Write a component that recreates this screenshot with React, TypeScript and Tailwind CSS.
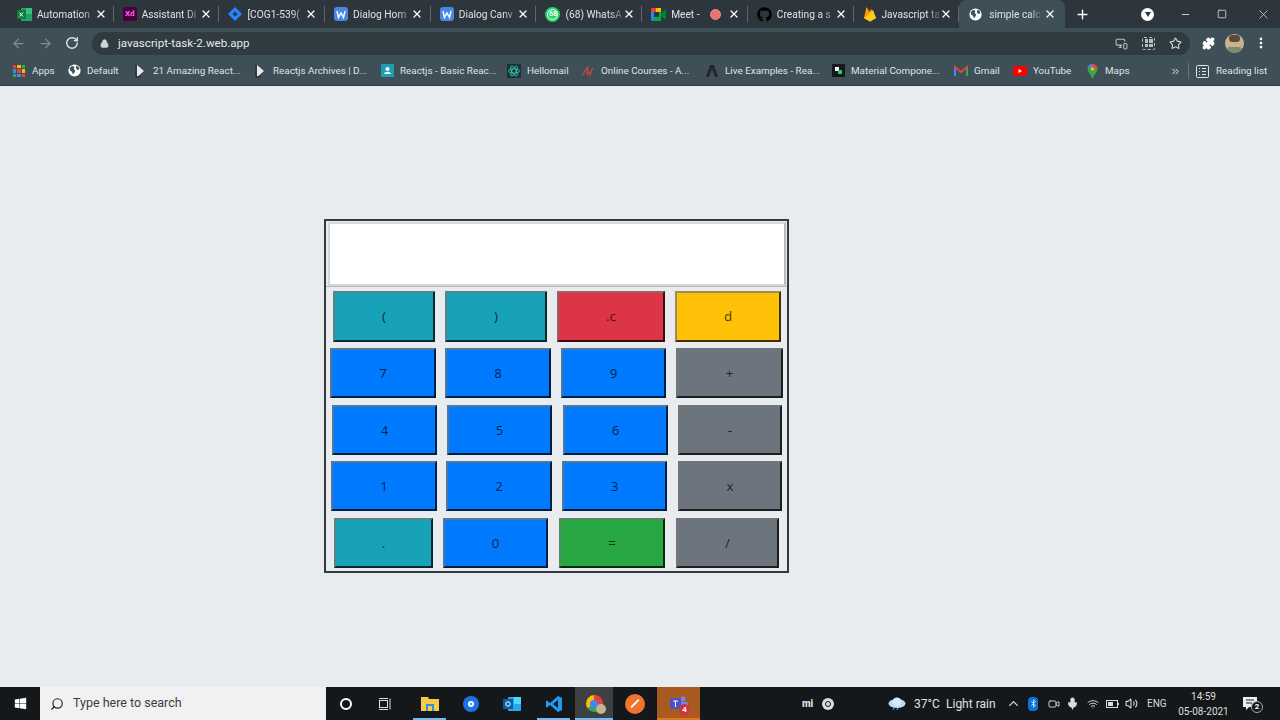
import React from 'react';
import { X, Plus, ArrowLeft, ArrowRight, RotateCw, Lock, Star, Puzzle, MoreVertical, Minus, Square, ChevronUp, Bluetooth, Mic, Wifi, Volume2, Search, MonitorSmartphone, ChevronsRight, Video } from 'lucide-react';
import { FaGithub, FaWindows } from 'react-icons/fa';

const Globe = ({ s = 15, c = '#fff', bg = '#3f4f58' }: { s?: number; c?: string; bg?: string }) => (
  <svg width={s} height={s} viewBox="0 0 16 16" className="shrink-0">
    <circle cx="8" cy="8" r="7.5" fill={c} />
    <path d="M2 5l3-2.5 3 1-1 2.5 2 2-1.5 3-1.5 2-1-3.5-2-1zM10 2l3 1.5 1 3-2.5 1-1.5-2z" fill={bg} />
  </svg>
);

const DocIcon = () => (
  <svg width="14" height="14" viewBox="0 0 14 14" className="shrink-0">
    <rect width="14" height="14" rx="3" fill="#4a86e8" />
    <path d="M3 4l1.500 6.500L7 6l2.500 4.500L11 4" stroke="#fff" strokeWidth="1.400" fill="none" />
  </svg>
);

const Page = () => (
  <svg width="12" height="14" viewBox="0 0 12 14"><path d="M3 1l7 6-7 6z" fill="#e8e8e8" /><path d="M2 1v12h5" stroke="#222" fill="none" /></svg>
);

const tabs = [
  { title: 'Automation', icon: <svg width="15" height="13" viewBox="0 0 15 13" className="shrink-0"><rect x="4" width="11" height="13" rx="1" fill="#21a366" /><rect x="9" width="6" height="6" fill="#33c481" /><rect width="9" height="9" y="2" fill="#107c41" /><path d="M2.500 4.500l3.500 4M6 4.500l-3.500 4" stroke="#fff" /></svg> },
  { title: 'Assistant Di', icon: <span className="flex h-[14px] w-[14px] shrink-0 items-center justify-center rounded-[2px] bg-[#470137] text-[8px] font-bold text-[#ff61f6]">Xd</span> },
  { title: '[COG1-539(', icon: <svg width="14" height="14" viewBox="0 0 14 14" className="shrink-0"><path d="M7 0l7 7-7 7-7-7z" fill="#2684ff" /><path d="M7 4.500L9.500 7 7 9.500 4.500 7z" fill="#2d363c" /></svg> },
  { title: 'Dialog Hom', icon: <DocIcon /> },
  { title: 'Dialog Canv', icon: <DocIcon /> },
  { title: '(68) WhatsA', icon: <span className="relative flex h-[15px] w-[15px] shrink-0 items-center justify-center rounded-full bg-[#25d366] text-[7px] font-bold text-white"><span className="absolute inset-[2px] rounded-full border border-white" />68</span> },
];

const tabsRight = [
  { title: 'Creating a s', icon: <FaGithub size={15} className="shrink-0 text-black" /> },
  { title: 'Javascript ta', icon: <svg width="14" height="16" viewBox="0 0 14 16" className="shrink-0"><path d="M1 12L3.500 1l3 5 1.500-3 5 9-6 3.500z" fill="#ffa000" /><path d="M1 12l5.500-6 1.500-3 5 9-6 3.500z" fill="#f57c00" /><path d="M1 12l9-8 3 8-6 3.500z" fill="#ffca28" /></svg> },
];

const TabTitle = ({ title, w }: { title: string; w: string }) => (
  <span className={`${w} overflow-hidden whitespace-nowrap pt-px text-[10.200px] text-[#dfe3e6] [mask-image:linear-gradient(90deg,#000_78%,rgba(0,0,0,0.25))]`}>{title}</span>
);

const Tab = ({ title, icon }: { title: string; icon: React.ReactNode }) => (
  <div className="relative flex h-[28px] w-[105.700px] shrink-0 items-center pl-[9px]">
    {icon}
    <span className="w-[5px] shrink-0" />
    <TabTitle title={title} w="w-[57px]" />
    <X size={12} strokeWidth={2.5} className="ml-[1px] shrink-0 text-white" />
    <span className="absolute right-0 top-[6px] h-[16px] w-px bg-[#5b6870]" />
  </div>
);

const bookmarks: { label: string; icon: React.ReactNode; w: string }[] = [
  { label: 'Apps', w: 'w-[55px]', icon: <span className="grid h-[12px] w-[12px] grid-cols-3 gap-[1px]">{['#ea4335','#fbbc05','#34a853','#4285f4','#ea4335','#fbbc05','#34a853','#4285f4','#ea4335'].map((c, i) => <i key={i} className="block" style={{ background: c }} />)}</span> },
  { label: 'Default', w: 'w-[66px]', icon: <Globe s={13} /> },
  { label: '21 Amazing React...', w: 'w-[120px]', icon: <Page /> },
  { label: 'Reactjs Archives | D...', w: 'w-[127px]', icon: <Page /> },
  { label: 'Reactjs - Basic Reac...', w: 'w-[127px]', icon: <svg width="13" height="13" viewBox="0 0 13 13"><rect width="13" height="13" fill="#1b9fb5" /><circle cx="6.500" cy="5" r="2" fill="#fff" /><path d="M3 10c1-3 6-3 7 0z" fill="#fff" /></svg> },
  { label: 'Hellomail', w: 'w-[74px]', icon: <svg width="14" height="14" viewBox="0 0 14 14"><rect width="14" height="14" fill="#17343a" /><g fill="none" stroke="#3fd0b0" strokeWidth=".8"><ellipse cx="7" cy="7" rx="5.500" ry="2.200" /><ellipse cx="7" cy="7" rx="5.500" ry="2.200" transform="rotate(60 7 7)" /><ellipse cx="7" cy="7" rx="5.500" ry="2.200" transform="rotate(120 7 7)" /></g></svg> },
  { label: 'Online Courses - A...', w: 'w-[124px]', icon: <svg width="14" height="12" viewBox="0 0 14 12"><path d="M1 10C4 8 5 2 7 2L6 10M7 6l2 4c1-3 2-6 3-7" stroke="#c9453f" strokeWidth="1.400" fill="none" /></svg> },
  { label: 'Live Examples - Rea...', w: 'w-[126px]', icon: <svg width="14" height="14" viewBox="0 0 14 14"><path d="M5 1h4l4 12h-3L7 5 4 13H1z" fill="#23272b" /></svg> },
  { label: 'Material Compone...', w: 'w-[123px]', icon: <svg width="13" height="13" viewBox="0 0 13 13"><rect width="13" height="13" rx="1" fill="#16191c" /><rect x="3" y="3" width="4" height="4" fill="#fff" /><rect x="6" y="6" width="4" height="4" fill="#2ecc71" /></svg> },
  { label: 'Gmail', w: 'w-[59px]', icon: <svg width="14" height="11" viewBox="0 0 14 11"><path d="M1 11V2l6 5 6-5v9" fill="none" stroke="#ea4335" strokeWidth="1.800" /><path d="M1 11V3" stroke="#4285f4" strokeWidth="2" /><path d="M13 11V3" stroke="#34a853" strokeWidth="2" /></svg> },
  { label: 'YouTube', w: 'w-[72px]', icon: <svg width="14" height="10" viewBox="0 0 14 10"><rect width="14" height="10" rx="2.500" fill="#f00" /><path d="M5.500 3l3.500 2-3.500 2z" fill="#fff" /></svg> },
  { label: 'Maps', w: 'w-[85px]', icon: <svg width="11" height="15" viewBox="0 0 11 15"><path d="M5.500 0a5 5 0 0 1 5 5c0 3-3.500 5.500-5 10C4 10.500.5 8 .5 5a5 5 0 0 1 5-5z" fill="#34a853" /><path d="M1 3a5 5 0 0 1 4.500-3V5z" fill="#4285f4" /><path d="M5.500 0a5 5 0 0 1 5 5H5.500z" fill="#ea4335" /><circle cx="5.500" cy="5" r="1.800" fill="#fbbc05" /></svg> },
];

// widths and margins follow the reference, the rows are not quite aligned there
const rows = [
  { cls: 'mt-[4px] ml-[7px] h-[51px]', keys: [
    { t: '(', c: 'w-[102px] bg-[#17a2b8]' },
    { t: ')', c: 'ml-[10px] w-[102px] bg-[#17a2b8]' },
    { t: '.c', c: 'ml-[10px] w-[108px] bg-[#dc3545]' },
    { t: 'd', c: 'ml-[10px] w-[106px] bg-[#ffc107]' },
  ] },
  { cls: 'mt-[6px] ml-[4px] h-[50px]', keys: [
    { t: '7', c: 'w-[106px] bg-[#007bff]' },
    { t: '8', c: 'ml-[9px] w-[106px] bg-[#007bff]' },
    { t: '9', c: 'ml-[10px] w-[105px] bg-[#007bff]' },
    { t: '+', c: 'ml-[10px] w-[107px] bg-[#6c757d]' },
  ] },
  { cls: 'mt-[7px] ml-[6px] h-[50px]', keys: [
    { t: '4', c: 'w-[105px] bg-[#007bff]' },
    { t: '5', c: 'ml-[10px] w-[105px] bg-[#007bff]' },
    { t: '6', c: 'ml-[11px] w-[105px] bg-[#007bff]' },
    { t: '-', c: 'ml-[10px] w-[104px] bg-[#6c757d]' },
  ] },
  { cls: 'mt-[6px] ml-[5px] h-[50px]', keys: [
    { t: '1', c: 'w-[106px] bg-[#007bff]' },
    { t: '2', c: 'ml-[9px] w-[106px] bg-[#007bff]' },
    { t: '3', c: 'ml-[10px] w-[105px] bg-[#007bff]' },
    { t: 'x', c: 'ml-[11px] w-[104px] bg-[#6c757d]' },
  ] },
  { cls: 'mt-[7px] ml-[8px] h-[50px]', keys: [
    { t: '.', c: 'w-[99px] bg-[#17a2b8]' },
    { t: '0', c: 'ml-[10px] w-[105px] bg-[#007bff]' },
    { t: '=', c: 'ml-[11px] w-[106px] bg-[#28a745]' },
    { t: '/', c: 'ml-[11px] w-[103px] bg-[#6c757d]' },
  ] },
];

const App: React.FC = () => {
  return (
    <div className="flex h-[720px] w-[1280px] flex-col overflow-hidden bg-[#e9ecef] font-['Roboto','Noto_Sans',sans-serif]">
      {/* Tab strip */}
      <div className="flex h-[28px] shrink-0 items-center bg-[#2d363c] pl-[8px]">
        {tabs.map((t) => <Tab key={t.title} {...t} />)}
        <div className="relative flex h-[28px] w-[105.700px] shrink-0 items-center pl-[9px]">
          <svg width="15" height="13" viewBox="0 0 15 13" className="shrink-0"><path d="M2 0h8v13H2a2 2 0 0 1-2-2V2a2 2 0 0 1 2-2z" fill="#00ac47" /><path d="M5 0h5v4H5z" fill="#ffba00" /><path d="M0 4V2a2 2 0 0 1 2-2h3v4z" fill="#ea4335" /><path d="M0 4h3v9H2a2 2 0 0 1-2-2z" fill="#2684fc" /><rect x="3" y="4" width="5" height="5" fill="#2d363c" /><path d="M10 5l5-4v11l-5-4z" fill="#00832d" /></svg>
          <span className="w-[5px] shrink-0" />
          <TabTitle title="Meet - " w="w-[39px]" />
          <span className="flex h-[11px] w-[11px] shrink-0 items-center justify-center rounded-full border border-[#f28b82] bg-[#e57373]" />
          <X size={12} strokeWidth={2.5} className="ml-[7px] shrink-0 text-white" />
          <span className="absolute right-0 top-[6px] h-[16px] w-px bg-[#5b6870]" />
        </div>
        {tabsRight.map((t) => <Tab key={t.title} {...t} />)}
        <div className="flex h-[28px] w-[106px] shrink-0 items-center rounded-t-[8px] bg-[#3f4f58] pl-[10px]">
          <Globe s={13} c="#fff" />
          <span className="w-[7px] shrink-0" />
          <TabTitle title="simple calc" w="w-[51px]" />
          <X size={12} strokeWidth={2.5} className="ml-[4px] shrink-0 text-white" />
        </div>
        <Plus size={15} strokeWidth={2.2} className="ml-[10px] text-white" />
        <span className="ml-[51px] flex h-[13px] w-[13px] items-center justify-center rounded-full bg-white"><span className="h-0 w-0 border-x-[3.500px] border-t-[5px] border-x-transparent border-t-[#2d363c]" /></span>
        <Minus size={11} className="ml-[26px] text-[#d8dcde]" />
        <Square size={10} className="ml-[26px] text-[#d8dcde]" />
        <X size={15} strokeWidth={1.2} className="ml-[29px] text-[#d8dcde]" />
      </div>

      {/* Toolbar */}
      <div className="flex h-[30px] shrink-0 items-center bg-[#3f4f58] pl-[11px]">
        <ArrowLeft size={15} className="text-[#7f8d95]" />
        <ArrowRight size={15} className="ml-[12px] text-[#7f8d95]" />
        <RotateCw size={14} strokeWidth={2.4} className="ml-[12px] text-[#e2e6e8]" />
        <div className="ml-[13px] flex h-[23px] w-[1098px] items-center rounded-full bg-[#2f3a41] pl-[8px]">
          <Lock size={9} fill="#d5d9dc" className="text-[#d5d9dc]" />
          <span className="ml-[9px] pt-px text-[11.600px] text-[#e6e9eb]">javascript-task-2.web.app</span>
          <MonitorSmartphone size={13} className="ml-auto text-[#b6bec3]" />
          <span className="ml-[14px] grid h-[13px] w-[13px] grid-cols-2 gap-[1px] rounded-[2px] border border-dashed border-[#b6bec3] p-[1.500px]"><i className="bg-[#b6bec3]" /><i className="bg-[#b6bec3]" /><i className="bg-[#b6bec3]" /><i className="bg-[#b6bec3]" /></span>
          <Star size={13} className="ml-[14px] mr-[8px] text-[#d5d9dc]" />
        </div>
        <Puzzle size={13} fill="#fff" className="ml-[12px] text-white" />
        <span className="relative ml-[10px] h-[19px] w-[19px] overflow-hidden rounded-full bg-[#c9b38f]"><span className="absolute left-[4px] top-[1px] h-[7px] w-[11px] rounded-full bg-[#5c4a35]" /><span className="absolute bottom-0 left-[2px] h-[6px] w-[15px] rounded-full bg-[#7d8a6c]" /></span>
        <MoreVertical size={14} strokeWidth={2.6} className="ml-[10px] text-white" />
      </div>

      {/* Bookmarks */}
      <div className="flex h-[27px] shrink-0 items-center bg-[#3f4f58] pb-px pl-[12px] text-[9.900px] text-[#dfe3e6]">
        {bookmarks.map((b) => (
          <div key={b.label} className={`flex shrink-0 items-center whitespace-nowrap ${b.w}`}>
            <span className="flex w-[14px] justify-center">{b.icon}</span>
            <span className="ml-[6px]">{b.label}</span>
          </div>
        ))}
        <ChevronsRight size={11} className="shrink-0 text-white" />
        <span className="ml-[7px] h-[16px] w-px shrink-0 bg-[#66737b]" />
        <svg width="13" height="13" viewBox="0 0 13 13" className="ml-[7px] shrink-0" fill="none" stroke="#dfe3e6"><rect x=".5" y=".5" width="12" height="12" rx="1" /><path d="M3 3.500h1M6 3.500h4M3 6.500h1M6 6.500h4M3 9.500h1M6 9.500h4" /></svg>
        <span className="ml-[7px] whitespace-nowrap">Reading list</span>
      </div>
      <div className="h-px shrink-0 bg-[#2f3a41]" />

      {/* Page */}
      <main className="flex-1 pl-[324px] pt-[133px]">
        <div className="h-[354px] w-[465px] border-2 border-[#343a40]">
          <div className="ml-[2px] mt-px h-[64px] w-[458px] border-2 border-b-[#d4d6d8] border-l-[#d4d6d8] border-r-[#b8bbbe] border-t-[#d4d6d8] bg-white" />
          <div className="h-px bg-[#b8bbbe]" />
          {rows.map((row, i) => (
            <div key={i} className={`flex ${row.cls}`}>
              {row.keys.map((k) => (
                <button key={k.t} className={`flex h-full items-center justify-center border-2 border-b-[rgba(0,0,0,0.75)] border-l-[rgba(118,118,118,0.7)] border-r-[rgba(0,0,0,0.75)] border-t-[rgba(118,118,118,0.7)] pt-px font-['Noto_Sans',sans-serif] text-[13.330px] text-black/70 ${k.c}`}>
                  {k.t}
                </button>
              ))}
            </div>
          ))}
        </div>
      </main>

      {/* Taskbar */}
      <footer className="flex h-[33px] shrink-0 items-center bg-[#15181b] text-white">
        <div className="flex h-full w-[40px] items-center justify-center"><FaWindows size={13} /></div>
        <div className="flex h-full w-[286px] items-center bg-[#f1f1f1] pl-[10px] text-[12.500px] text-[#3c3c3c]">
          <Search size={14} className="-scale-x-100 text-[#222]" />
          <span className="ml-[9px]">Type here to search</span>
        </div>
        <span className="ml-[14px] h-[12px] w-[12px] shrink-0 rounded-full border-2 border-white" />
        <svg width="13" height="12" viewBox="0 0 13 12" className="ml-[27px] shrink-0" fill="none" stroke="#ddd"><rect x=".5" y="2.500" width="8" height="7" /><path d="M0 .5h9M0 11.500h9M11 .5v11" /></svg>
        <div className="relative ml-[19px] flex h-full w-[37px] shrink-0 items-center justify-center">
          <svg width="18" height="15" viewBox="0 0 18 15"><path d="M0 1h7l1 2h10v12H0z" fill="#f7c948" /><rect x="5" y="8" width="8" height="7" fill="#2f8fd8" /><rect x="7" y="10" width="4" height="5" fill="#f7c948" /></svg>
          <span className="absolute bottom-0 h-[2px] w-[33px] bg-[#76b9ed]" />
        </div>
        <span className="ml-[15px] flex h-[16px] w-[16px] shrink-0 items-center justify-center rounded-full bg-[#1a73e8]"><span className="h-[6px] w-[6px] rounded-full border-2 border-white" /></span>
        <svg width="18" height="16" viewBox="0 0 18 16" className="ml-[24px] shrink-0"><rect x="5" y="1" width="13" height="14" rx="1" fill="#28a8ea" /><rect x="11" y="1" width="7" height="7" fill="#50d9ff" /><rect y="3" width="10" height="10" fill="#0a5ea8" /><circle cx="5" cy="8" r="2.200" fill="none" stroke="#fff" /></svg>
        <div className="relative ml-[16px] flex h-full w-[33px] shrink-0 items-center justify-center">
          <svg width="18" height="18" viewBox="0 0 18 18"><path d="M13 1l4 2v12l-4 2L5 10l-3 2.500L1 12V6l1-.5L5 8z" fill="#1f9cf0" /><path d="M13 5v8L8 9z" fill="#15181b" /></svg>
          <span className="absolute bottom-0 h-[2px] w-full bg-[#76b9ed]" />
        </div>
        <div className="relative ml-[5px] flex h-full w-[38px] shrink-0 items-center justify-center bg-[#3e4143]">
          <span className="relative h-[17px] w-[17px] rounded-full bg-[conic-gradient(#ea4335_0_33%,#34a853_33%_66%,#fbbc05_66%)]"><span className="absolute inset-[4.500px] rounded-full bg-[#4285f4]" /><span className="absolute -bottom-[2px] -right-[3px] h-[10px] w-[10px] rounded-full bg-[#c9b38f]" /></span>
          <span className="absolute bottom-0 h-[2px] w-full bg-[#76b9ed]" />
        </div>
        <div className="flex w-[44px] shrink-0 items-center justify-center">
          <span className="flex h-[20px] w-[20px] items-center justify-center rounded-full bg-[#f0742c]"><span className="h-[11px] w-[2px] rotate-45 bg-white" /></span>
        </div>
        <div className="relative flex h-full w-[43px] shrink-0 items-center justify-center bg-[#a85a20]">
          <svg width="18" height="15" viewBox="0 0 18 15"><circle cx="13" cy="3" r="2.500" fill="#7b83eb" /><rect x="9" y="6" width="9" height="8" rx="2" fill="#7b83eb" /><rect y="2" width="11" height="11" rx="1" fill="#4b53bc" /><path d="M3 5h5M5.500 5v6" stroke="#fff" /></svg>
          <span className="absolute bottom-[5px] right-[10px] flex h-[11px] w-[11px] items-center justify-center rounded-full bg-[#d13438] text-[8px] font-bold">4</span>
          <span className="absolute bottom-0 h-[2px] w-full bg-[#e0761f]" />
        </div>
        <span className="ml-[102px] w-[13px] shrink-0 text-[10px] font-extrabold tracking-tight text-[#e6e6e6]">mi</span>
        <span className="ml-[7px] flex h-[12px] w-[12px] shrink-0 items-center justify-center rounded-full bg-[#dcdcdc]"><span className="h-[6px] w-[6px] rounded-full border border-[#15181b]" /></span>
        <svg width="18" height="13" viewBox="0 0 18 13" className="ml-[54px] shrink-0"><ellipse cx="9" cy="6.500" rx="8.500" ry="4.500" fill="#b9dcf5" /><circle cx="9" cy="5" r="4.500" fill="#d8ecfa" /><path d="M6 11l-1 2M10 11l-1 2" stroke="#69b1e8" /></svg>
        <span className="ml-[8px] w-[26px] shrink-0 whitespace-nowrap text-[12px] text-[#e2e2e2]">37°C</span>
        <span className="ml-[6px] w-[50px] shrink-0 whitespace-nowrap text-[12px] text-[#e2e2e2]">Light rain</span>
        <ChevronUp size={15} className="ml-[10px] shrink-0 text-[#ddd]" />
        <span className="ml-[7px] flex h-[14px] w-[10px] shrink-0 items-center justify-center rounded-[4px] bg-[#0a74d6]"><Bluetooth size={9} className="text-white" /></span>
        <Video size={12} className="ml-[10px] shrink-0 text-[#ccc]" />
        <Mic size={13} fill="#ddd" className="ml-[6px] shrink-0 text-[#ddd]" />
        <Wifi size={12} className="ml-[8px] shrink-0 text-[#ccc]" />
        <svg width="13" height="8" viewBox="0 0 13 8" className="ml-[7px] shrink-0" fill="none" stroke="#ddd"><rect x=".5" y=".5" width="11" height="7" /><rect x="2" y="2" width="5" height="4" fill="#ddd" stroke="none" /><path d="M12.500 3v2" /></svg>
        <Volume2 size={13} className="ml-[6px] shrink-0 text-[#ddd]" />
        <span className="ml-[9px] w-[20px] shrink-0 text-[10px] text-[#ddd]">ENG</span>
        <div className="ml-[11px] flex w-[51px] shrink-0 flex-col items-center text-[10px] leading-[15px] text-[#ddd]">
          <span>14:59</span>
          <span className="whitespace-nowrap">05-08-2021</span>
        </div>
        <span className="relative ml-[14px] shrink-0">
          <svg width="14" height="13" viewBox="0 0 14 13"><path d="M0 0h14v10H6l-3 3v-3H0z" fill="#eee" /><path d="M3 3h8M3 6h6" stroke="#15181b" /></svg>
          <span className="absolute -bottom-[3px] -right-[6px] flex h-[12px] w-[12px] items-center justify-center rounded-full border border-[#aaa] bg-[#15181b] text-[8px] font-bold">2</span>
        </span>
      </footer>
    </div>
  );
};

export default App;
